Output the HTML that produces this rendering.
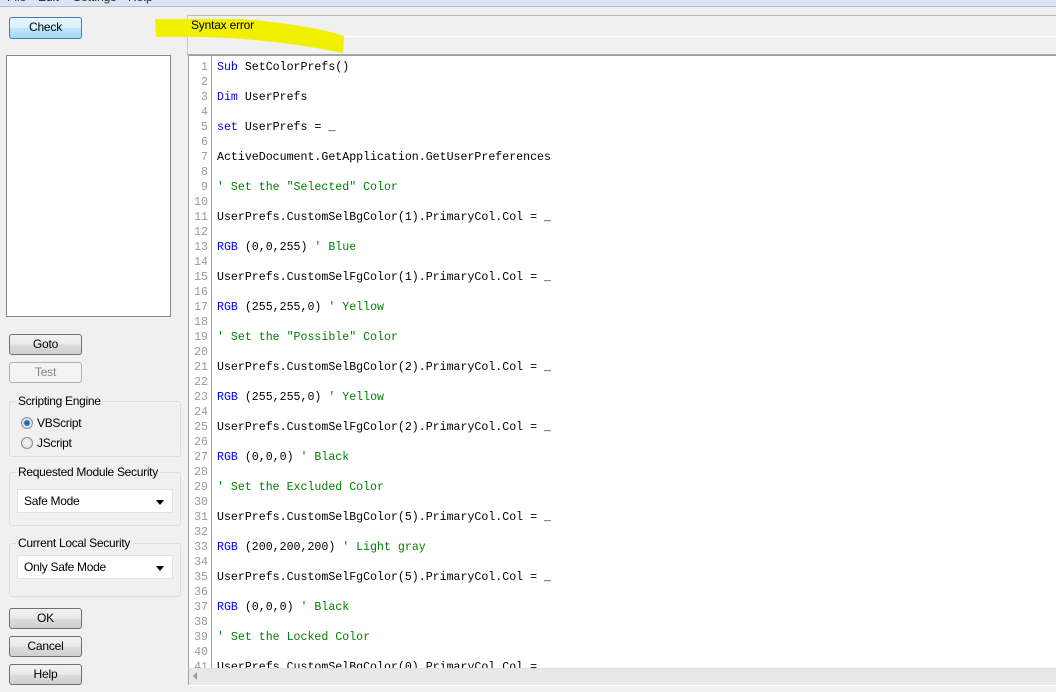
<!DOCTYPE html>
<html><head><meta charset="utf-8"><style>
*{margin:0;padding:0;box-sizing:border-box}
body{width:1056px;height:692px;overflow:hidden;background:#f0f0f0;font-family:"Liberation Sans",sans-serif;font-size:12px;color:#000;position:relative}
.abs{position:absolute}
.menu{left:0;top:0;width:1056px;height:7px;background:#dde4f3;border-bottom:1px solid #b9bccb;overflow:hidden}
.menu span{position:absolute;top:-10px;font-size:12px;color:#222}
.btn{position:absolute;left:9px;width:73px;height:21px;border:1px solid #707070;border-radius:3px;background:linear-gradient(#f2f2f2,#ebebeb 50%,#dddddd 51%,#cfcfcf);text-align:center;line-height:19px;font-size:12px;letter-spacing:-0.2px}
.btn.dis{border-color:#adb2b5;background:#f4f4f4;color:#838383}
.grp{position:absolute;left:9px;width:172px;border:1px solid #d5dfe5;border-radius:3px;letter-spacing:-0.3px}
.grp .t{position:absolute;left:6px;top:-8px;background:#f0f0f0;padding:0 2px;font-size:12px}
.sel{position:absolute;left:7px;width:156px;height:24px;background:#fff;border:1px solid #e3e3e3;padding-left:6px;line-height:22px}
.sel:after{content:"";position:absolute;right:8px;top:10px;border:4px solid transparent;border-top:5px solid #000}
.radio{position:absolute;left:11px;width:12px;height:12px;border-radius:50%;border:1px solid #8e8f8f;background:radial-gradient(#f5f5f5,#dcdcdc)}
.code{position:absolute;left:188px;top:55px;width:868px;height:613px;background:#fff;border-left:1px solid #a0a0a0;border-top:1px solid #a0a0a0;overflow:hidden}
.ln{position:absolute;left:0;top:4px;width:19px;text-align:right;color:#999;font-family:"Liberation Mono",monospace;font-size:11.6px;line-height:15px}
.sep{position:absolute;left:22px;top:0;width:1px;height:613px;background:#a0a0a0}
.tx{position:absolute;left:28px;top:4px;font-family:"Liberation Mono",monospace;font-size:11.6px;line-height:15px;white-space:pre;color:#000}
.k{color:#0000ff}.c{color:#008000}
</style></head><body>
<div class="abs menu"><span style="left:7px">File</span><span style="left:38px">Edit</span><span style="left:73px">Settings</span><span style="left:128px">Help</span></div>
<div class="abs" style="left:187px;top:15px;width:869px;height:1px;background:#b8b8b8"></div>
<div class="abs" style="left:187px;top:15px;width:1px;height:40px;background:#c8c8c8"></div>
<div class="abs" style="left:187px;top:36px;width:869px;height:1px;background:#fff"></div>
<div class="abs" style="left:187px;top:54px;width:869px;height:1px;background:#a8a8a8"></div>
<svg class="abs" style="left:0;top:0" width="400" height="60"><path d="M155 19 L240 19 C280 22 320 28 344 36 L343 53 C300 44 250 38 200 37 L156 37Z" fill="#f0f000"/></svg>
<div class="abs" style="left:191px;top:18px;font-size:12px;letter-spacing:-0.2px">Syntax error</div>
<div class="btn" style="left:9px;top:17px;width:73px;height:22px;border-color:#3c7fb1;background:linear-gradient(#eaf6fd,#d9f0fc 50%,#bee6fd 51%,#a7d9f5)">Check</div>
<div class="abs" style="left:6px;top:55px;width:165px;height:262px;background:#fff;border:1px solid #828790"></div>
<div class="btn" style="top:334px">Goto</div>
<div class="btn dis" style="top:362px">Test</div>
<div class="grp" style="top:401px;height:56px"><span class="t">Scripting Engine</span>
<div class="radio" style="top:15px;background:radial-gradient(#1f5fa0 0,#2a77c0 2.5px,#dfeaf5 3.5px)"></div><span class="abs" style="left:27px;top:14px">VBScript</span>
<div class="radio" style="top:35px"></div><span class="abs" style="left:27px;top:34px">JScript</span></div>
<div class="grp" style="top:472px;height:54px"><span class="t">Requested Module Security</span><div class="sel" style="top:16px">Safe Mode</div></div>
<div class="grp" style="top:543px;height:54px"><span class="t">Current Local Security</span><div class="sel" style="top:11px">Only Safe Mode</div></div>
<div class="btn" style="top:608px">OK</div>
<div class="btn" style="top:636px">Cancel</div>
<div class="btn" style="top:664px">Help</div>
<div class="code"><div class="ln">1<br>2<br>3<br>4<br>5<br>6<br>7<br>8<br>9<br>10<br>11<br>12<br>13<br>14<br>15<br>16<br>17<br>18<br>19<br>20<br>21<br>22<br>23<br>24<br>25<br>26<br>27<br>28<br>29<br>30<br>31<br>32<br>33<br>34<br>35<br>36<br>37<br>38<br>39<br>40<br>41</div><div class="sep"></div>
<div class="tx"><span class="k">Sub</span> SetColorPrefs()

<span class="k">Dim</span> UserPrefs

<span class="k">set</span> UserPrefs = _

ActiveDocument.GetApplication.GetUserPreferences

<span class="c">' Set the "Selected" Color</span>

UserPrefs.CustomSelBgColor(1).PrimaryCol.Col = _

<span class="k">RGB</span> (0,0,255) <span class="c">' Blue</span>

UserPrefs.CustomSelFgColor(1).PrimaryCol.Col = _

<span class="k">RGB</span> (255,255,0) <span class="c">' Yellow</span>

<span class="c">' Set the "Possible" Color</span>

UserPrefs.CustomSelBgColor(2).PrimaryCol.Col = _

<span class="k">RGB</span> (255,255,0) <span class="c">' Yellow</span>

UserPrefs.CustomSelFgColor(2).PrimaryCol.Col = _

<span class="k">RGB</span> (0,0,0) <span class="c">' Black</span>

<span class="c">' Set the Excluded Color</span>

UserPrefs.CustomSelBgColor(5).PrimaryCol.Col = _

<span class="k">RGB</span> (200,200,200) <span class="c">' Light gray</span>

UserPrefs.CustomSelFgColor(5).PrimaryCol.Col = _

<span class="k">RGB</span> (0,0,0) <span class="c">' Black</span>

<span class="c">' Set the Locked Color</span>

UserPrefs.CustomSelBgColor(0).PrimaryCol.Col = _</div></div>
<div class="abs" style="left:188px;top:668px;width:868px;height:17px;background:#e8e8e8;border-top:1px solid #e0e0e0;border-left:1px solid #a0a0a0"></div>
<div class="abs" style="left:193px;top:672px;width:0;height:0;border:4px solid transparent;border-right:4px solid #999;border-left:0"></div>
<div class="abs" style="left:188px;top:685px;width:868px;height:1px;background:#fff"></div>
</body></html>
